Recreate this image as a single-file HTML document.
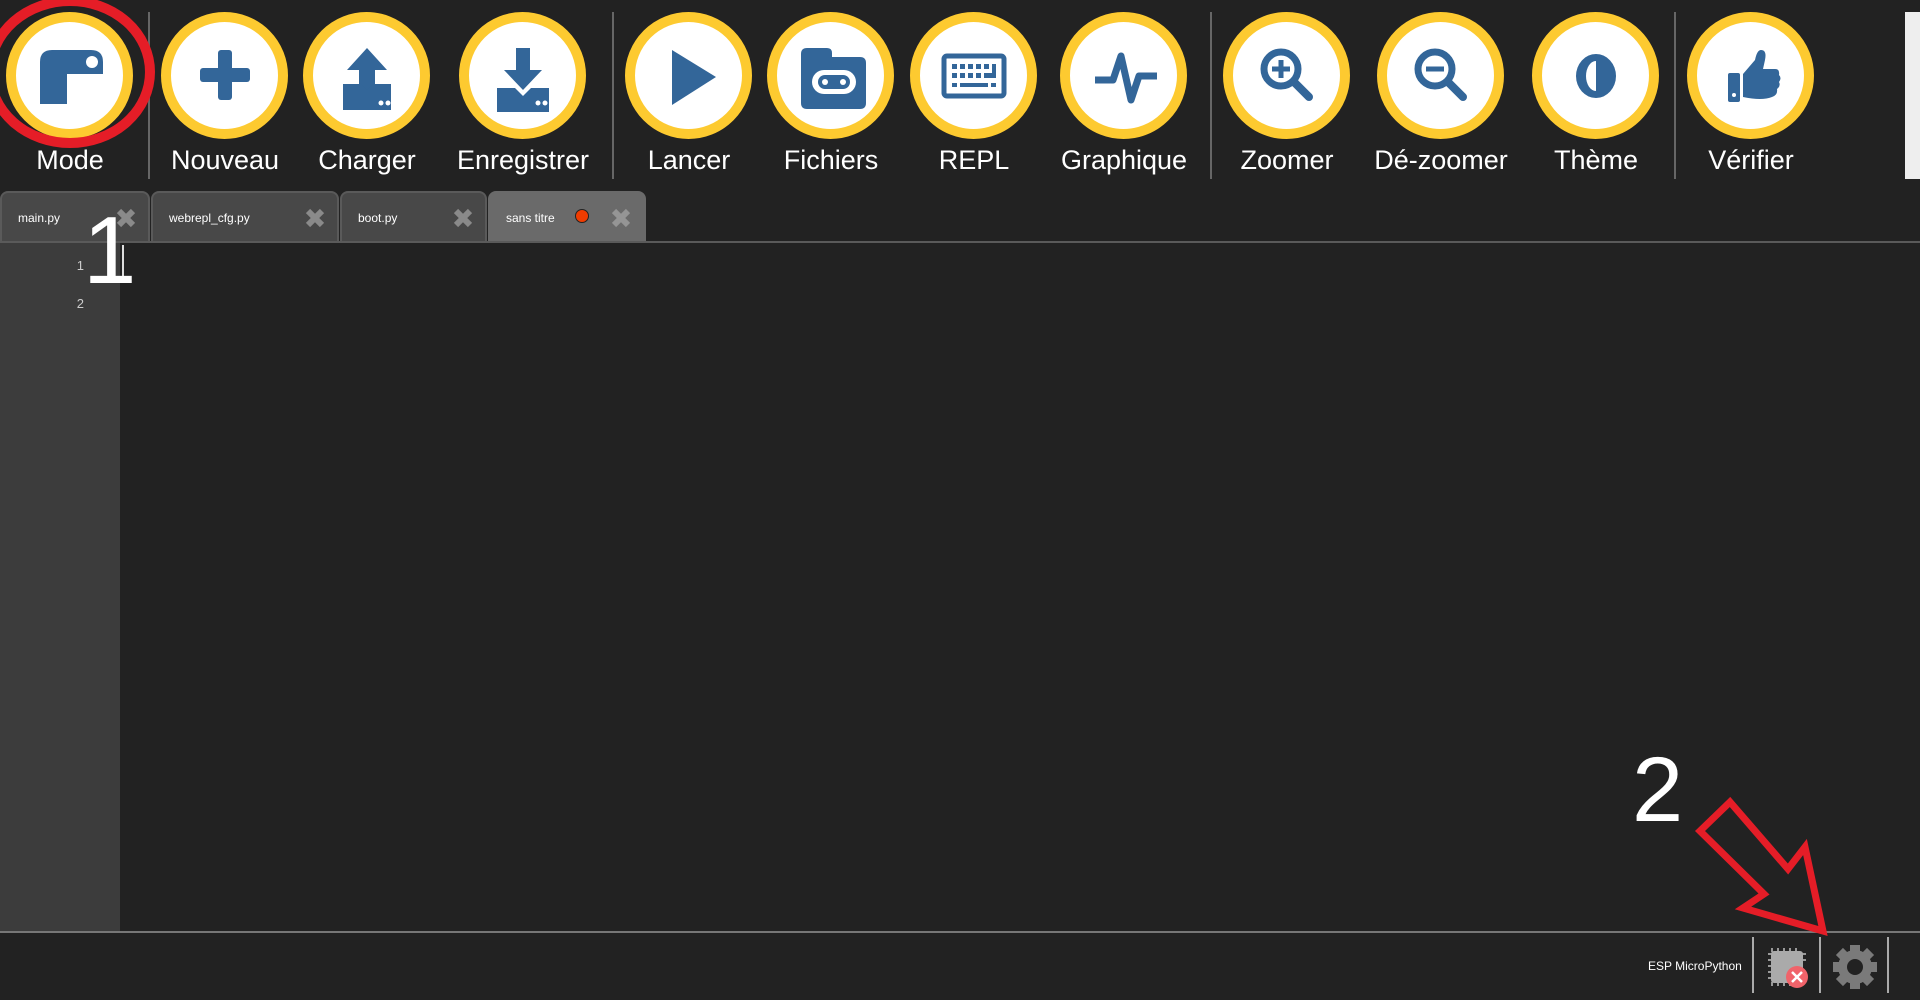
<!DOCTYPE html>
<html><head><meta charset="utf-8"><style>
html,body{margin:0;padding:0;width:1920px;height:1000px;overflow:hidden;background:#222;font-family:"Liberation Sans",sans-serif}
.btn{position:absolute;top:12px;width:127px;height:127px;box-sizing:border-box;border:10px solid #fdca30;border-radius:50%;background:#fff}
.btn svg{position:absolute;left:-10px;top:-10px;width:127px;height:127px}
.lbl{position:absolute;top:145px;width:200px;text-align:center;color:#fff;font-size:27px}
.sep{position:absolute;top:12px;height:167px;width:2px;background:#666}
.tab{position:absolute;top:191px;height:50px;background:#484848;border:2px solid #5a5a5a;border-bottom:none;border-radius:8px 8px 0 0;box-sizing:border-box;color:#fff;font-size:12px}
.tab span{position:absolute;left:16px;top:18px}
.x{position:absolute;top:14px;width:22px;height:22px}
</style></head><body>
<div class="sep" style="left:148px"></div>
<div class="sep" style="left:612px"></div>
<div class="sep" style="left:1210px"></div>
<div class="sep" style="left:1674px"></div>
<div style="position:absolute;left:1905px;top:12px;width:15px;height:167px;background:#eee"></div>

<div class="btn" style="left:6px"><svg viewBox="0 0 127 127"><path d="M34 50q0-12 12-12h39q12 0 12 12v12h-36v30h-27z" fill="#336699"/><circle cx="86" cy="50" r="6" fill="#fff"/></svg></div>
<div class="lbl" style="left:-30px">Mode</div>
<div class="btn" style="left:161px"><svg viewBox="0 0 127 127"><rect x="57" y="38" width="14" height="50" rx="3" fill="#336699"/><rect x="39" y="56" width="50" height="14" rx="3" fill="#336699"/></svg></div>
<div class="lbl" style="left:125px">Nouveau</div>
<div class="btn" style="left:303px"><svg viewBox="0 0 127 127"><path d="M64 36l20 22h-12v20h-16v-20h-12z" fill="#336699"/><path d="M40 72h18l6 6 6-6h18v26h-48z" fill="#336699"/><circle cx="78" cy="91" r="2.5" fill="#fff"/><circle cx="85" cy="91" r="2.5" fill="#fff"/></svg></div>
<div class="lbl" style="left:267px">Charger</div>
<div class="btn" style="left:459px"><svg viewBox="0 0 127 127"><path d="M57 36h14v22h12l-19 20-19-20h12z" fill="#336699"/><path d="M38 76h18l8 8 8-8h18v24h-52z" fill="#336699"/><circle cx="79" cy="91" r="2.5" fill="#fff"/><circle cx="86" cy="91" r="2.5" fill="#fff"/></svg></div>
<div class="lbl" style="left:423px">Enregistrer</div>

<div class="btn" style="left:625px"><svg viewBox="0 0 127 127"><path d="M47 38l44 27-44 28z" fill="#336699"/></svg></div>
<div class="lbl" style="left:589px">Lancer</div>
<div class="btn" style="left:767px"><svg viewBox="0 0 127 127"><path d="M34 42q0-6 6-6h20q5 0 5 5v4h28q6 0 6 6v40q0 6-6 6h-53q-6 0-6-6z" fill="#336699"/><rect x="45" y="58" width="44" height="24" rx="12" fill="#fff"/><rect x="51" y="63" width="32" height="14" rx="7" fill="#336699"/><circle cx="58" cy="70" r="3" fill="#fff"/><circle cx="76" cy="70" r="3" fill="#fff"/></svg></div>
<div class="lbl" style="left:731px">Fichiers</div>
<div class="btn" style="left:910px"><svg viewBox="0 0 127 127"><rect x="34" y="44" width="60" height="40" rx="3" fill="none" stroke="#336699" stroke-width="5"/><g fill="#336699"><rect x="42" y="52" width="5" height="5"/><rect x="50" y="52" width="5" height="5"/><rect x="58" y="52" width="5" height="5"/><rect x="66" y="52" width="5" height="5"/><rect x="74" y="52" width="5" height="5"/><rect x="82" y="52" width="4" height="14"/><rect x="42" y="61" width="5" height="5"/><rect x="50" y="61" width="5" height="5"/><rect x="58" y="61" width="5" height="5"/><rect x="66" y="61" width="5" height="5"/><rect x="74" y="61" width="8" height="5"/><rect x="42" y="71" width="5" height="4"/><rect x="50" y="71" width="28" height="4"/><rect x="81" y="71" width="5" height="4"/></g></svg></div>
<div class="lbl" style="left:874px">REPL</div>
<div class="btn" style="left:1060px"><svg viewBox="0 0 127 127"><path d="M35 68h18l8-24 10 44 8-24h18" fill="none" stroke="#336699" stroke-width="7" stroke-linejoin="round"/></svg></div>
<div class="lbl" style="left:1024px">Graphique</div>

<div class="btn" style="left:1223px"><svg viewBox="0 0 127 127"><circle cx="58" cy="57" r="17" fill="none" stroke="#336699" stroke-width="7"/><path d="M71 70l15 15" stroke="#336699" stroke-width="8" stroke-linecap="round"/><path d="M58 48v18M49 57h18" stroke="#336699" stroke-width="5"/></svg></div>
<div class="lbl" style="left:1187px">Zoomer</div>
<div class="btn" style="left:1377px"><svg viewBox="0 0 127 127"><circle cx="58" cy="57" r="17" fill="none" stroke="#336699" stroke-width="7"/><path d="M71 70l15 15" stroke="#336699" stroke-width="8" stroke-linecap="round"/><path d="M49 57h18" stroke="#336699" stroke-width="5"/></svg></div>
<div class="lbl" style="left:1341px">Dé-zoomer</div>
<div class="btn" style="left:1532px"><svg viewBox="0 0 127 127"><ellipse cx="64" cy="64" rx="20" ry="22" fill="#336699"/><path d="M64 49a10 15 0 0 0 0 30z" fill="#fff"/></svg></div>
<div class="lbl" style="left:1496px">Thème</div>
<div class="btn" style="left:1687px"><svg viewBox="0 0 127 127"><rect x="41" y="61" width="12" height="29" rx="2" fill="#336699"/><circle cx="47" cy="83" r="2" fill="#fff"/><path d="M56 62l12-14q2-10 6-10q6 0 4 10l-2 9h12q5 0 4 6q3 3 0 7q2 4-2 7q1 6-5 8q-10 4-29 0z" fill="#336699"/></svg></div>
<div class="lbl" style="left:1651px">Vérifier</div>

<svg style="position:absolute;left:0;top:0" width="170" height="170"><ellipse cx="70" cy="72" rx="80" ry="71" fill="none" stroke="#e51d27" stroke-width="10"/></svg>

<div class="tab" style="left:0;width:150px"><span>main.py</span><svg class="x" style="left:113px" viewBox="0 0 22 22"><path d="M4 4l14 14M18 4L4 18" stroke="#8a8a8a" stroke-width="6"/></svg></div>
<div class="tab" style="left:151px;width:188px"><span>webrepl_cfg.py</span><svg class="x" style="left:151px" viewBox="0 0 22 22"><path d="M4 4l14 14M18 4L4 18" stroke="#8a8a8a" stroke-width="6"/></svg></div>
<div class="tab" style="left:340px;width:147px"><span>boot.py</span><svg class="x" style="left:110px" viewBox="0 0 22 22"><path d="M4 4l14 14M18 4L4 18" stroke="#8a8a8a" stroke-width="6"/></svg></div>
<div class="tab" style="left:488px;width:158px;background:#6a6a6a;border-color:#6a6a6a"><span>sans titre</span><div style="position:absolute;left:85px;top:16px;width:14px;height:14px;border-radius:50%;background:#f03c00;border:1px solid #222;box-sizing:border-box"></div><svg class="x" style="left:120px" viewBox="0 0 22 22"><path d="M4 4l14 14M18 4L4 18" stroke="#959595" stroke-width="6"/></svg></div>
<div style="position:absolute;left:0;top:241px;width:1920px;height:2px;background:#5a5a5a"></div>

<div style="position:absolute;left:0;top:243px;width:120px;height:689px;background:#3c3c3c"></div>
<div style="position:absolute;left:70px;top:258px;width:14px;text-align:right;color:#ccc;font-size:13px">1</div>
<div style="position:absolute;left:70px;top:296px;width:14px;text-align:right;color:#ccc;font-size:13px">2</div>
<div style="position:absolute;left:122px;top:245px;width:2px;height:36px;background:#ddd"></div>
<div style="position:absolute;left:83px;top:196px;color:#fff;font-size:96px;line-height:110px">1</div>
<div style="position:absolute;left:1632px;top:740px;color:#fff;font-size:92px;line-height:100px">2</div>

<div style="position:absolute;left:0;top:931px;width:1920px;height:2px;background:#777"></div>
<div style="position:absolute;left:1648px;top:959px;color:#fff;font-size:12px">ESP MicroPython</div>
<div style="position:absolute;left:1752px;top:937px;width:2px;height:56px;background:#aaa"></div>
<div style="position:absolute;left:1819px;top:937px;width:2px;height:56px;background:#aaa"></div>
<div style="position:absolute;left:1887px;top:937px;width:2px;height:56px;background:#aaa"></div>
<svg style="position:absolute;left:1762px;top:942px" width="50" height="50" viewBox="0 0 50 50"><g stroke="#999" stroke-width="2"><path d="M10 6v4M16 6v4M22 6v4M28 6v4M34 6v4M10 40v4M16 40v4M22 40v4M28 40v4M6 12h4M6 18h4M6 24h4M6 30h4M6 36h4M40 12h4M40 18h4"/></g><rect x="9" y="9" width="32" height="32" rx="3" fill="#aaa"/><circle cx="35" cy="35" r="11" fill="#f0636a"/><path d="M30 30l10 10M40 30l-10 10" stroke="#fff" stroke-width="2.5"/></svg>
<svg style="position:absolute;left:1830px;top:942px" width="50" height="50" viewBox="0 0 50 50"><g fill="#7a7a7a"><circle cx="25" cy="25" r="17"/><rect x="20" y="3" width="10" height="10"/><rect x="20" y="37" width="10" height="10"/><rect x="3" y="20" width="10" height="10"/><rect x="37" y="20" width="10" height="10"/><g transform="rotate(45 25 25)"><rect x="20" y="3" width="10" height="10"/><rect x="20" y="37" width="10" height="10"/><rect x="3" y="20" width="10" height="10"/><rect x="37" y="20" width="10" height="10"/></g></g><circle cx="25" cy="25" r="8" fill="#222"/></svg>

<svg style="position:absolute;left:0;top:0" width="1920" height="1000"><path d="M1730 802L1700 831L1764 894L1743 908L1823 931L1805 847L1788 869Z" fill="none" stroke="#e51d27" stroke-width="7"/></svg>
</body></html>
